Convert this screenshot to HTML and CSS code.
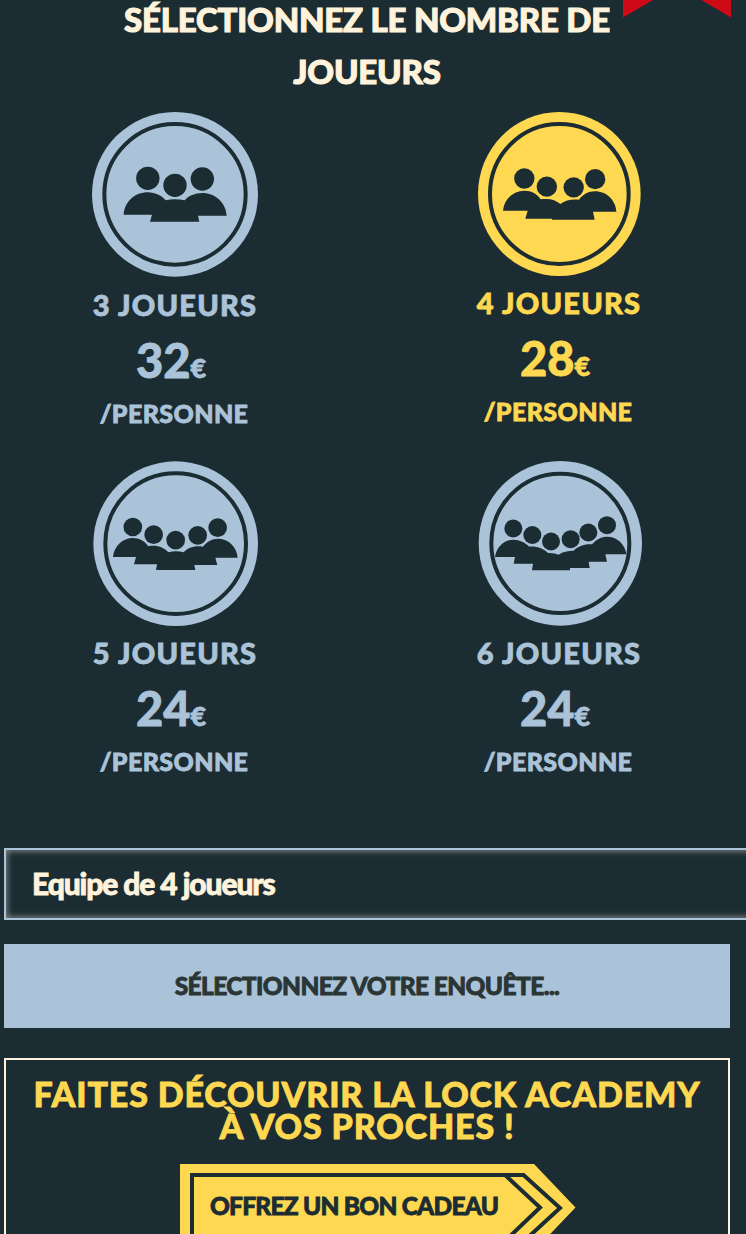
FILE: index.html
```
<!DOCTYPE html>
<html lang="fr">
<head>
  <meta charset="UTF-8">
  <title>Lock Academy - Réservation</title>
  <link rel="stylesheet" href="styles.css">
</head>
<body>

<svg class="ribbon" viewBox="0 0 108 18"><path d="M0 0H30L0 17.5ZM78.500 0H108V17.500Z"/></svg>

<h1>Sélectionnez le nombre de joueurs</h1>

<div class="players">
  <div class="card first">
    <svg class="badge" viewBox="0 30 570 510">
      <ellipse class="disc" cx="285" cy="283" rx="249" ry="247"/>
      <ellipse class="ring" cx="285" cy="283" rx="212" ry="211"/>
      <circle cx="203.500" cy="235" r="35"/><circle cx="367" cy="237" r="35"/><circle cx="285" cy="256" r="35"/>
      <path d="M131 344C134 304 165 277 204 277C226 277 247 288 257 301Q285 294 314 301C325 288 345 279 367 279C406 279 437 307 440 347H354L358 365H210L216 344Z"/>
    </svg>
    <div class="label">3 joueurs</div>
    <div class="price">32<small>€</small></div>
    <div class="per">/personne</div>
  </div>

  <div class="card selected">
    <svg class="badge" viewBox="-6 30 570 510">
      <ellipse class="disc" cx="280" cy="282" rx="244" ry="246"/>
      <ellipse class="ring" cx="280" cy="282" rx="208" ry="210"/>
      <circle cx="175" cy="235.500" r="30.500"/><circle cx="242.500" cy="260" r="30.500"/><circle cx="323" cy="262" r="30.500"/><circle cx="387.500" cy="237.500" r="30.500"/>
      <path d="M111 332C114 297 142 272 176 272C196 272 214 281 224 298C249 294 269 299 283 312C298 301 316 297 339 299C350 284 367 274 387 274C421 274 449 300 451 335H381L386 359H258V356H178L185 332Z"/>
    </svg>
    <div class="label">4 joueurs</div>
    <div class="price">28<small>€</small></div>
    <div class="per">/personne</div>
  </div>

  <div class="card">
    <svg class="badge" viewBox="0 30 570 510">
      <ellipse class="disc" cx="287" cy="281" rx="247" ry="247"/>
      <ellipse class="ring" cx="287" cy="281" rx="211" ry="211"/>
      <circle cx="158.500" cy="231" r="28"/><circle cx="221" cy="254" r="28"/><circle cx="287" cy="270.500" r="28"/><circle cx="353" cy="256" r="28"/><circle cx="413" cy="233" r="28"/>
      <path d="M99 321C102 288 128 264 159 264C178 264 194 273 205 289C231 284 251 292 265 307Q287 301 311 307C323 293 344 286 369 290C380 275 396 266 414 266C445 266 471 290 473 323H406L412 345H343L346 360H228L231 343H162L168 321Z"/>
    </svg>
    <div class="label">5 joueurs</div>
    <div class="price">24<small>€</small></div>
    <div class="per">/personne</div>
  </div>

  <div class="card">
    <svg class="badge" viewBox="-6 30 570 510">
      <ellipse class="disc" cx="283" cy="280" rx="245" ry="247"/>
      <ellipse class="ring" cx="283" cy="280" rx="207" ry="209"/>
      <circle cx="142" cy="235.500" r="27"/><circle cx="199" cy="255" r="27"/><circle cx="255" cy="274.500" r="27"/><circle cx="314" cy="267.500" r="27"/><circle cx="367" cy="247.500" r="27"/><circle cx="423" cy="225.500" r="27"/>
      <path d="M87 321C92 290 114 269 142 269C161 269 178 278 190 290C213 288 232 296 246 309Q263 308 278 314C290 305 305 302 323 302C336 289 356 281 378 283C391 268 406 260 424 260C453 260 478 283 481 313H418L423 335H368L371 354H312V361H198L201 341H143L147 321Z"/>
    </svg>
    <div class="label">6 joueurs</div>
    <div class="price">24<small>€</small></div>
    <div class="per">/personne</div>
  </div>
</div>

<div class="team">Equipe de 4 joueurs</div>

<div class="select">Sélectionnez votre enquête...</div>

<div class="gift">
  <h2>Faites découvrir La Lock Academy<br>à vos proches !</h2>
  <a class="gift-btn" href="#">
    <svg viewBox="0 0 396 87">
      <path class="fill" d="M0 0H354L395.500 43.500L354 87H0Z"/>
      <path class="line" d="M12 87V11H343.500L380 44L343.500 77.500H12M325 11L360 43.500L325 77"/>
    </svg>
    <span>Offrez un bon cadeau</span>
  </a>
</div>

</body>
</html>
```
FILE: styles.css
```
body {
  margin: 0;
  height: 1234px;
  overflow: hidden;
  background-color: #1b2c32;
  color: #fff3dc;
  font-family: Lato, sans-serif;
  font-weight: 900;
  -webkit-text-stroke: 0.8px currentColor;
}
.ribbon {
  position: absolute;
  top: 0;
  left: 623px;
  width: 108px;
  height: 18px;
  fill: #cf0a17;
}
h1 {
  width: 560px;
  margin: -7px 0 13px 87px;
  font-size: 33px;
  line-height: 52px;
  font-weight: 900;
  text-align: center;
  text-transform: uppercase;
  letter-spacing: -0.2px;
  -webkit-text-stroke-width: 1.1px;
}
.players {
  display: grid;
  grid-template-columns: 350px 350px;
  grid-auto-rows: 320px;
  gap: 30px 34px;
}
.card {
  color: #abc3d8;
  text-align: center;
  text-transform: uppercase;
}
.card.selected {
  color: #ffd851;
}
.badge {
  display: block;
  width: 190px;
  height: 170px;
  margin: 0 auto;
  fill: #1b2c32;
}
.first .badge {
  margin-bottom: 2px;
}
.disc {
  fill: currentColor;
}
.ring {
  fill: none;
  stroke: #1b2c32;
  stroke-width: 12;
}
.label {
  font-size: 29px;
  line-height: 46px;
  letter-spacing: 1.2px;
}
.price {
  padding-right: 8px;
  font-size: 47px;
  line-height: 65px;
}
.price small {
  font-size: 27px;
  line-height: 0;
}
.per {
  padding-right: 2px;
  font-size: 25px;
  line-height: 40px;
  letter-spacing: 0.4px;
}
.team {
  box-sizing: border-box;
  width: 780px;
  height: 72px;
  margin: 68px 0 24px 4px;
  padding-left: 26px;
  border: 2px solid #abc3d8;
  box-shadow: inset 0 0 6px 1px #8a8a8a;
  font-size: 30px;
  line-height: 66px;
  letter-spacing: -1.1px;
}
.select {
  width: 726px;
  height: 84px;
  margin: 0 0 30px 4px;
  background-color: #abc3d8;
  color: #2a3535;
  font-size: 24.5px;
  line-height: 83px;
  letter-spacing: -0.6px;
  text-align: center;
  text-transform: uppercase;
}
.gift {
  box-sizing: border-box;
  width: 726px;
  height: 230px;
  margin-left: 4px;
  padding-top: 18px;
  border: 2px solid #fff3dc;
}
h2 {
  margin: 0 0 22px;
  color: #ffd851;
  font-size: 34px;
  line-height: 32px;
  font-weight: 900;
  text-align: center;
  text-transform: uppercase;
  white-space: nowrap;
  letter-spacing: 0.85px;
}
.gift-btn {
  display: grid;
  width: 396px;
  height: 87px;
  margin-left: 174px;
  color: #1b2c32;
  text-decoration: none;
  text-transform: uppercase;
}
.gift-btn svg, .gift-btn span {
  grid-area: 1 / 1;
}
.gift-btn span {
  padding-left: 30px;
  font-size: 24.5px;
  line-height: 83px;
  letter-spacing: -0.75px;
  white-space: nowrap;
}
.fill {
  fill: #ffd851;
}
.line {
  fill: none;
  stroke: #1b2c32;
  stroke-width: 4;
}
```
